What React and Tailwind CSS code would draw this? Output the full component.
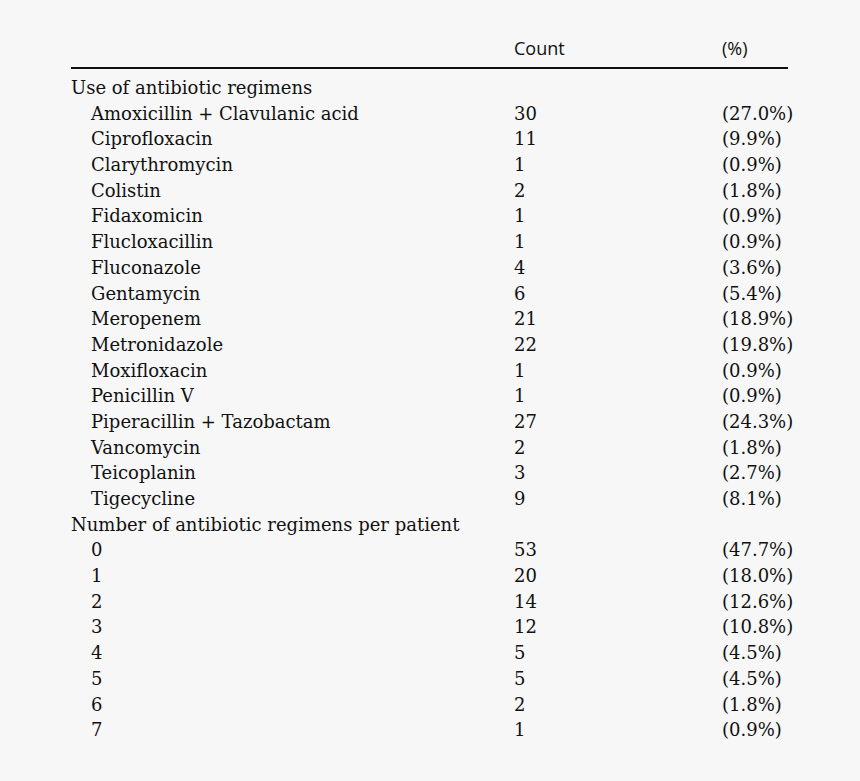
import React from 'react'

const regimens = [
  ['Amoxicillin + Clavulanic acid', '30', '(27.0%)'],
  ['Ciprofloxacin', '11', '(9.9%)'],
  ['Clarythromycin', '1', '(0.9%)'],
  ['Colistin', '2', '(1.8%)'],
  ['Fidaxomicin', '1', '(0.9%)'],
  ['Flucloxacillin', '1', '(0.9%)'],
  ['Fluconazole', '4', '(3.6%)'],
  ['Gentamycin', '6', '(5.4%)'],
  ['Meropenem', '21', '(18.9%)'],
  ['Metronidazole', '22', '(19.8%)'],
  ['Moxifloxacin', '1', '(0.9%)'],
  ['Penicillin V', '1', '(0.9%)'],
  ['Piperacillin + Tazobactam', '27', '(24.3%)'],
  ['Vancomycin', '2', '(1.8%)'],
  ['Teicoplanin', '3', '(2.7%)'],
  ['Tigecycline', '9', '(8.1%)'],
]

const perPatient = [
  ['0', '53', '(47.7%)'],
  ['1', '20', '(18.0%)'],
  ['2', '14', '(12.6%)'],
  ['3', '12', '(10.8%)'],
  ['4', '5', '(4.5%)'],
  ['5', '5', '(4.5%)'],
  ['6', '2', '(1.8%)'],
  ['7', '1', '(0.9%)'],
]

function Row({ label, count, pct, indent }) {
  return (
    <div className="grid grid-cols-[443px_208px_1fr] h-[25.7px] items-center">
      <div className={indent ? 'pl-5' : ''}>{label}</div>
      <div>{count}</div>
      <div>{pct}</div>
    </div>
  )
}

export default function App() {
  return (
    <div className="min-h-[781px] w-[860px] bg-[#f7f7f7] text-[#111] pt-[30px] pl-[71px]">
      <div className="w-[717px]">
        <div className="grid grid-cols-[443px_208px_1fr] h-[39px] items-center border-b-2 border-[#111] font-['Open_Sans',sans-serif] text-[18px]">
          <div></div>
          <div>Count</div>
          <div>(%)</div>
        </div>
        <div className="font-['DejaVu_Serif',serif] text-[18px] pt-[5px]">
          <Row label="Use of antibiotic regimens" />
          {regimens.map(([l, c, p]) => (
            <Row key={l} label={l} count={c} pct={p} indent />
          ))}
          <Row label="Number of antibiotic regimens per patient" />
          {perPatient.map(([l, c, p]) => (
            <Row key={l} label={l} count={c} pct={p} indent />
          ))}
        </div>
      </div>
    </div>
  )
}
